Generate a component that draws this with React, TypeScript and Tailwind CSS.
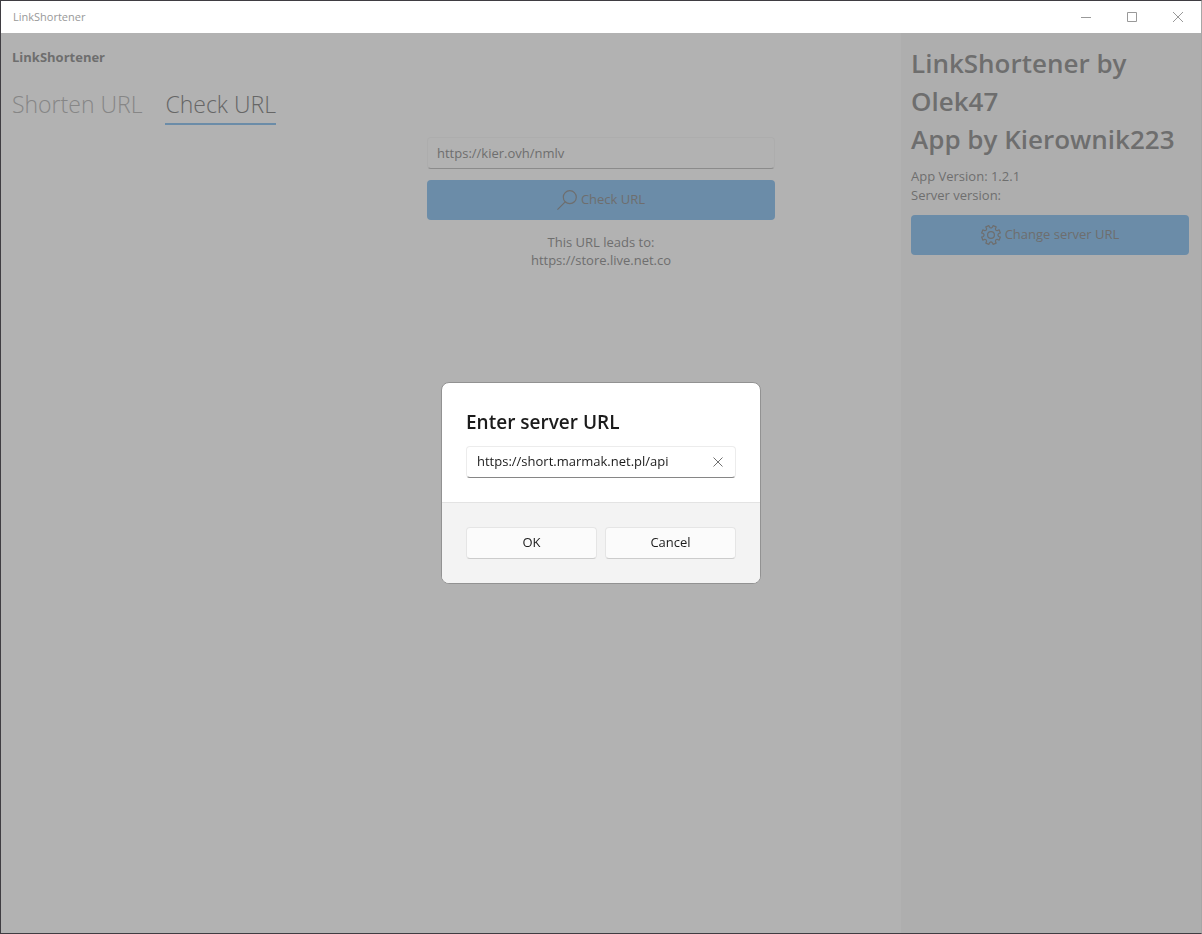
import React, { useState } from "react";

const point = (radius: number, degrees: number) => {
  const angle = (degrees * Math.PI) / 180;
  return `${(10 + radius * Math.cos(angle)).toFixed(2)} ${(10 + radius * Math.sin(angle)).toFixed(2)}`;
};

// Eight teeth with rounded valleys between them
const gearPath =
  Array.from({ length: 8 }, (_, i) => {
    const tooth = 22.5 + i * 45;
    return [
      `${i === 0 ? "M" : "L"}${point(9.6, tooth - 10)}`,
      `L${point(9.6, tooth + 10)}`,
      `L${point(7.9, tooth + 12)}`,
      `Q${point(6, tooth + 22.5)} ${point(7.9, tooth + 33)}`,
    ].join("");
  }).join("") + "Z";

const GearIcon: React.FC = () => (
  <svg className="size-5" viewBox="0 0 20 20" fill="none" stroke="currentColor" strokeWidth="1.2" strokeLinejoin="round">
    <path d={gearPath} />
    <circle cx="10" cy="10" r="3.4" />
  </svg>
);

const SearchIcon: React.FC = () => (
  <svg className="size-5" viewBox="0 0 20 20" fill="none" stroke="currentColor" strokeWidth="1.2">
    <circle cx="12.8" cy="7.2" r="6.5" />
    <path d="M8.2 11.8 0.4 19.6" />
  </svg>
);

const TitleBar: React.FC = () => (
  <header className="flex h-8 items-center justify-between bg-white pl-3 text-[#999999]">
    <span className="text-[11px]">LinkShortener</span>
    <div className="flex h-full">
      <button aria-label="Minimize" className="flex w-[46px] items-center justify-center">
        <svg className="size-[10px]" viewBox="0 0 10 10" stroke="currentColor">
          <path d="M0 5.5h10" />
        </svg>
      </button>
      <button aria-label="Maximize" className="flex w-[46px] items-center justify-center">
        <svg className="size-[10px]" viewBox="0 0 10 10" fill="none" stroke="currentColor">
          <path d="M.5 .5h9v9h-9z" />
        </svg>
      </button>
      <button aria-label="Close" className="flex w-[46px] items-center justify-center">
        <svg className="size-[10px]" viewBox="0 0 10 10" stroke="currentColor">
          <path d="M0 0l10 10M10 0 0 10" />
        </svg>
      </button>
    </div>
  </header>
);

const CheckUrl: React.FC = () => {
  const [url, setUrl] = useState("https://kier.ovh/nmlv");

  return (
    <div className="mx-auto mt-3 flex w-[348px] flex-col">
      <input
        aria-label="Shortened URL"
        value={url}
        onChange={(e) => setUrl(e.target.value)}
        className="h-8 rounded border border-[#adadad] border-b-[#8b8b8b] px-[9px] text-[13px]"
      />
      <button className="mt-[11px] flex h-10 items-center justify-center gap-1 rounded bg-[#6b8ca8] text-[13px]">
        <SearchIcon />
        Check URL
      </button>
      <p className="mt-[13px] text-center text-[13px] leading-[18px]">
        This URL leads to:
        <br />
        https://store.live.net.co
      </p>
    </div>
  );
};

const Sidebar: React.FC = () => (
  <aside className="col-start-1 row-start-1 w-[300px] justify-self-end bg-[#aeaeae] pt-[11px] pr-3 pl-[10px]">
    <h2 className="text-[26px] leading-[38px] font-semibold">
      LinkShortener by Olek47
      <br />
      App by Kierownik223
    </h2>
    <p className="mt-[9px] text-[13px] leading-[19px]">
      App Version: 1.2.1
      <br />
      Server version:
    </p>
    <button className="mt-[10px] flex h-10 w-full items-center justify-center gap-1 rounded bg-[#6b8ca8] text-[13px]">
      <GearIcon />
      Change server URL
    </button>
  </aside>
);

const ServerDialog: React.FC = () => {
  const [server, setServer] = useState("https://short.marmak.net.pl/api");

  return (
    <div className="fixed inset-x-0 top-8 bottom-0 flex items-center justify-center">
      <div
        role="dialog"
        aria-labelledby="server-title"
        className="w-[320px] overflow-hidden rounded-lg border border-[#929292] bg-white text-[#1b1b1b]"
      >
        <div className="p-6">
          <h2 id="server-title" className="text-[19px] leading-[30px] font-semibold">
            <label htmlFor="server-url">Enter server URL</label>
          </h2>
          <div className="mt-[9px] flex h-8 items-center rounded border border-[#ececec] border-b-[#868686] pr-3 pl-[10px]">
            <input
              id="server-url"
              value={server}
              onChange={(e) => setServer(e.target.value)}
              className="min-w-0 flex-1 text-[13px] outline-none"
            />
            <button aria-label="Clear" onClick={() => setServer("")} className="text-[#707070]">
              <svg className="size-[10px]" viewBox="0 0 10 10" stroke="currentColor">
                <path d="M.5 .5l9 9M9.5 .5l-9 9" />
              </svg>
            </button>
          </div>
        </div>
        <div className="grid grid-cols-2 gap-2 border-t border-[#e3e3e3] bg-[#f3f3f3] p-6 text-[13px]">
          <button className="h-8 rounded border border-[#e5e5e5] border-b-[#cccccc] bg-[#fbfbfb]">OK</button>
          <button className="h-8 rounded border border-[#e5e5e5] border-b-[#cccccc] bg-[#fbfbfb]">Cancel</button>
        </div>
      </div>
    </div>
  );
};

const App: React.FC = () => {
  return (
    <div className="flex min-h-screen flex-col border border-[#3f3d42] border-r-[#a6a6a6] bg-[#b2b2b2] font-['Open_Sans','Noto_Sans',sans-serif] text-[#6e6e6e]">
      <TitleBar />
      {/* The side pane opens over the page, so both share one grid cell */}
      <div className="grid flex-1">
        <main className="col-start-1 row-start-1">
          <h1 className="px-[11px] pt-[14px] text-[13px] leading-5 font-bold">LinkShortener</h1>
          <nav className="flex gap-[23px] px-[11px] pt-5 text-[23px] leading-[34px] font-light">
            <button className="border-b-2 border-transparent pb-[2px] text-[#868686]">Shorten URL</button>
            <button className="border-b-2 border-[#6b8ca8] pb-[2px] text-[#666666]">Check URL</button>
          </nav>
          <CheckUrl />
        </main>
        <Sidebar />
      </div>
      <ServerDialog />
    </div>
  );
};

export default App;
